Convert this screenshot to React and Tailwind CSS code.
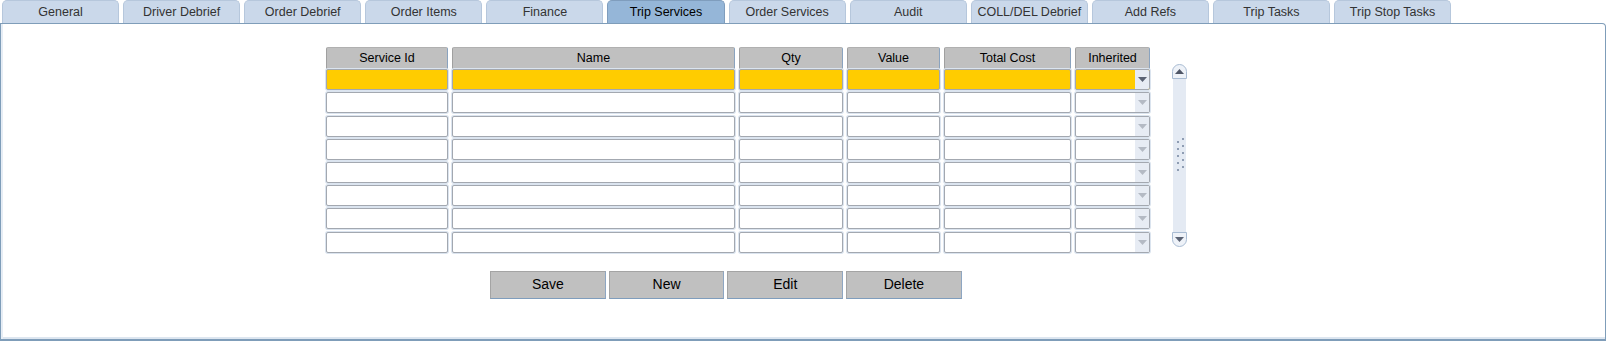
import React from 'react';

const TABS = [
  'General', 'Driver Debrief', 'Order Debrief', 'Order Items', 'Finance', 'Trip Services',
  'Order Services', 'Audit', 'COLL/DEL Debrief', 'Add Refs', 'Trip Tasks', 'Trip Stop Tasks',
];

const COLS = ['Service Id', 'Name', 'Qty', 'Value', 'Total Cost', 'Inherited'];
const ROWS = 8;

function Arrow({ dark }) {
  return (
    <svg width="9" height="5" viewBox="0 0 9 5">
      <path d="M0 0 L9 0 L4.5 5 Z" fill={dark ? '#5b6374' : '#b4bac4'} />
    </svg>
  );
}

function Cell({ yellow }) {
  return (
    <div
      className={
        'h-full rounded-[2px] border border-[#a3a8b0] shadow-[0_0_0_1px_#dbe4ef] ' +
        (yellow ? 'bg-[#ffcc00]' : 'bg-white')
      }
    />
  );
}

function SelectCell({ yellow }) {
  return (
    <div
      className={
        'h-full flex rounded-[2px] border border-[#a3a8b0] shadow-[0_0_0_1px_#dbe4ef] overflow-hidden ' +
        (yellow ? 'bg-[#ffcc00]' : 'bg-white')
      }
    >
      <div className="flex-1" />
      <div className="w-[14px] bg-[#e7ecf4] flex items-center justify-center">
        <Arrow dark={yellow} />
      </div>
    </div>
  );
}

export default function App() {
  return (
    <div className="w-[1607px] h-[343px] bg-white font-['Liberation_Sans',Arial,sans-serif] overflow-hidden">
      {/* Tabs */}
      <div className="flex pl-[2px] gap-[4px] h-[23px]">
        {TABS.map((t) => {
          const active = t === 'Trip Services';
          return (
            <div
              key={t}
              className={
                'w-[117.1px] h-[23px] rounded-t-[5px] border border-b-0 flex items-center justify-center text-[12.5px] pt-[1px] ' +
                (active
                  ? 'bg-[#95b6d8] border-[#7f9dbd] text-black'
                  : 'bg-[#cad8ea] border-[#b6c7dc] text-[#333]')
              }
            >
              {t}
            </div>
          );
        })}
      </div>

      {/* Panel */}
      <div className="w-[1606px] h-[318px] border border-[#7f9db9] border-b-2 rounded-tr-[4px] shadow-[inset_2px_0_0_#e6edf5,inset_0_-2px_0_#dde6f0] pt-[23px]">
        <div className="flex items-start">
          {/* Grid */}
          <div className="ml-[325px] grid grid-cols-[122px_283px_104px_93px_127px_75px] gap-x-[4px] gap-y-[2.2px] grid-rows-[20px_repeat(8,21px)]">
            {COLS.map((c) => (
              <div
                key={c}
                className="bg-[#c0c0c0] border border-[#a0a0a0] border-r-[#8aa3bf] border-t-[#b0b0b0] rounded-t-[2px] flex items-center justify-center text-[12.5px] text-black -mb-[2.2px]"
              >
                {c}
              </div>
            ))}
            {Array.from({ length: ROWS }).map((_, r) =>
              COLS.map((c) =>
                c === 'Inherited' ? (
                  <SelectCell key={r + c} yellow={r === 0} />
                ) : (
                  <Cell key={r + c} yellow={r === 0} />
                )
              )
            )}
          </div>

          {/* Scrollbar */}
          <div className="ml-[22px] mt-[17px] w-[15px] h-[183px] flex flex-col">
            <div className="h-[15px] rounded-t-[8px] border border-[#a9bcd3] bg-[#eef2f8] flex items-center justify-center">
              <svg width="9" height="5" viewBox="0 0 9 5"><path d="M0 5 L9 5 L4.5 0 Z" fill="#4f5666" /></svg>
            </div>
            <div className="flex-1 mx-[1px] bg-[#e4eaf3] flex items-center justify-center">
              <div className="grid grid-cols-2 gap-x-[3px] gap-y-[4px] pl-[2px]">
                {Array.from({ length: 10 }).map((_, i) => (
                  <div key={i} className={'w-[2px] h-[2px] bg-[#8f9db3] ' + (i % 2 ? 'mt-[-2px]' : 'mt-[1px]')} />
                ))}
              </div>
            </div>
            <div className="h-[15px] rounded-b-[8px] border border-[#a9bcd3] bg-[#eef2f8] flex items-center justify-center">
              <Arrow dark />
            </div>
          </div>
        </div>

        {/* Buttons */}
        <div className="flex gap-[3px] ml-[489px] mt-[18px]">
          {['Save', 'New', 'Edit', 'Delete'].map((b) => (
            <div
              key={b}
              className="w-[115.7px] h-[28px] bg-[#c0c0c0] border border-[#a4a4a4] border-b-[#7f9dbd] border-r-[#8ea6c2] flex items-center justify-center text-[14px] text-black"
            >
              {b}
            </div>
          ))}
        </div>
      </div>
    </div>
  );
}
